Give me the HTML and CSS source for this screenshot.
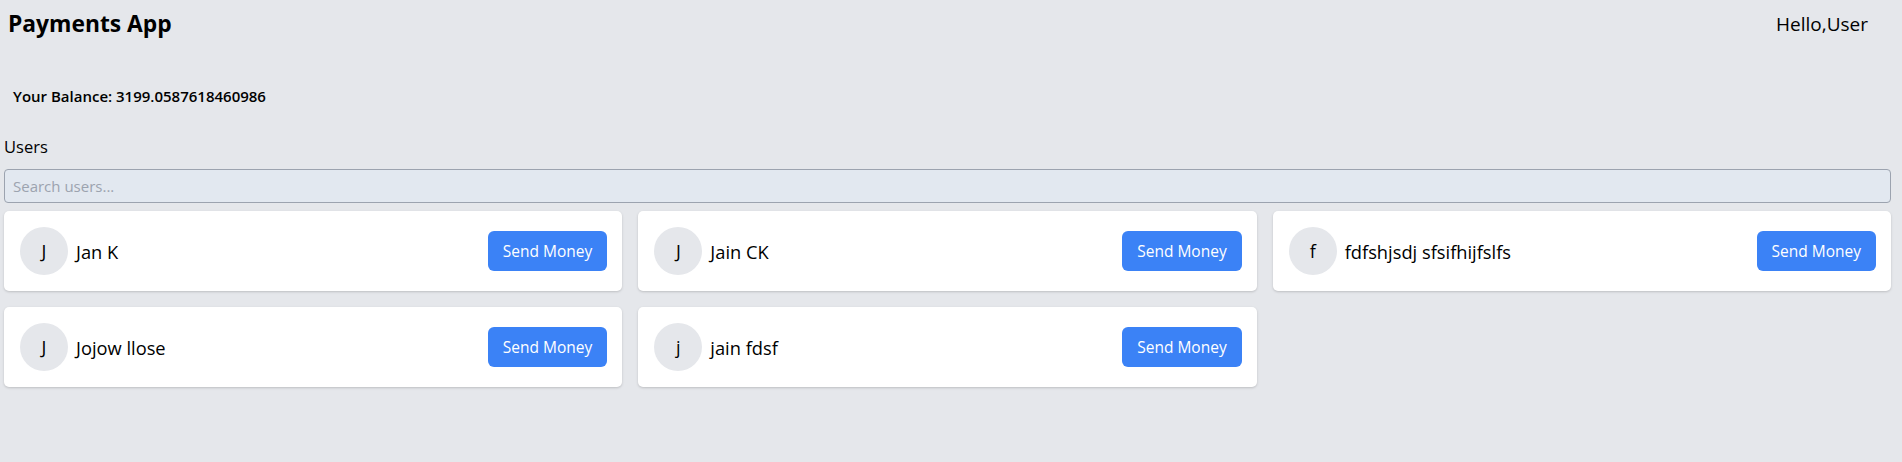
FILE: index.html
```html
<!DOCTYPE html>
<html lang="en">
<head>
<meta charset="utf-8">
<title>Payments App</title>
<link rel="stylesheet" href="styles.css">
</head>
<body>
  <header class="topbar">
    <h1 class="brand">Payments App</h1>
    <div class="greeting">Hello,User</div>
  </header>
  <main class="content">
    <div class="balance">Your Balance: 3199.0587618460986</div>
    <h2 class="users-title">Users</h2>
    <input class="search" type="text" placeholder="Search users...">
    <div class="user-grid">
      <div class="user-card">
        <div class="user-info"><div class="avatar">J</div><div class="user-name">Jan K</div></div>
        <button class="send-btn">Send Money</button>
      </div>
      <div class="user-card">
        <div class="user-info"><div class="avatar">J</div><div class="user-name">Jain CK</div></div>
        <button class="send-btn">Send Money</button>
      </div>
      <div class="user-card">
        <div class="user-info"><div class="avatar">f</div><div class="user-name">fdfshjsdj sfsifhijfslfs</div></div>
        <button class="send-btn">Send Money</button>
      </div>
      <div class="user-card">
        <div class="user-info"><div class="avatar">J</div><div class="user-name">Jojow llose</div></div>
        <button class="send-btn">Send Money</button>
      </div>
      <div class="user-card">
        <div class="user-info"><div class="avatar">j</div><div class="user-name">jain fdsf</div></div>
        <button class="send-btn">Send Money</button>
      </div>
    </div>
  </main>
</body>
</html>
```

FILE: styles.css
```css
* { box-sizing: border-box; }
html, body { margin: 0; padding: 0; }
body {
  background: #e5e7eb;
  font-family: "Open Sans", "Noto Sans", sans-serif;
  color: #000;
  min-height: 462px;
}
.topbar {
  display: flex;
  justify-content: space-between;
  align-items: center;
  padding: 8px 34px 0 8px;
}
.brand {
  margin: 0;
  font-size: 22.8px;
  line-height: 32px;
  font-weight: 700;
}
.greeting {
  font-size: 19px;
  line-height: 28px;
}
.content {
  padding: 0 11px 0 4px;
}
.balance {
  margin-top: 46px;
  padding-left: 9px;
  font-size: 15px;
  line-height: 20px;
  font-weight: 600;
}
.users-title {
  margin: 29px 0 0 0;
  font-size: 16.5px;
  line-height: 24px;
  font-weight: 500;
}
.search {
  display: block;
  width: 100%;
  margin-top: 10px;
  height: 34px;
  padding: 0 8px;
  border: 1px solid #9ca3af;
  border-radius: 4px;
  background: #e2e8f0;
  font-family: inherit;
  font-size: 15px;
  color: #111;
  outline: none;
}
.search::placeholder { color: #9ca3af; }
.user-grid {
  margin-top: 8px;
  display: grid;
  grid-template-columns: repeat(3, 1fr);
  gap: 16px;
}
.user-card {
  background: #fff;
  border-radius: 5px;
  box-shadow: 0 1px 3px rgba(0,0,0,0.12), 0 1px 2px rgba(0,0,0,0.06);
  padding: 16px 15px 16px 16px;
  display: flex;
  align-items: center;
  justify-content: space-between;
}
.user-info {
  display: flex;
  align-items: center;
  gap: 8px;
}
.avatar {
  width: 48px;
  height: 48px;
  border-radius: 50%;
  background: #e5e7eb;
  display: flex;
  align-items: center;
  justify-content: center;
  font-size: 18px;
}
.user-name {
  font-size: 18.3px;
}
.send-btn {
  height: 40px;
  padding: 0 15px;
  border: 0;
  border-radius: 6px;
  background: #3b82f6;
  color: #fff;
  font-family: inherit;
  font-size: 15.5px;
}
```
